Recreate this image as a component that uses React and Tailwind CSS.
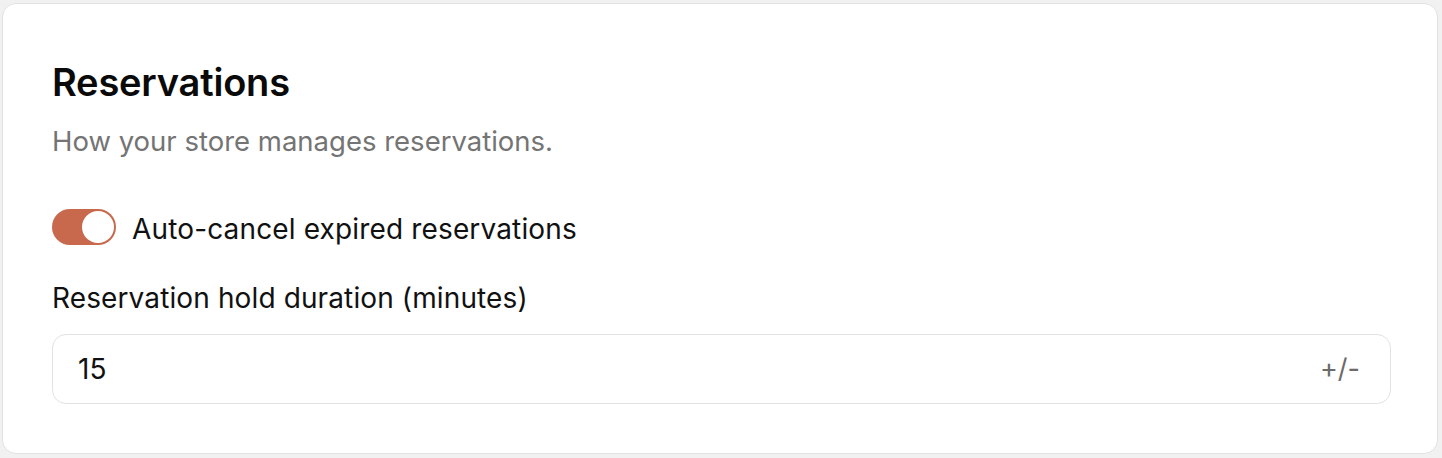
export default function App() {
  return (
    <div className="w-[1442px] h-[458px] bg-[#f1f1f1] pt-[3px] pl-[2px]" style={{ fontFamily: "Inter, 'Noto Sans', sans-serif" }}>
      <div className="w-[1436px] h-[451px] bg-white border border-[#e2e2e2] rounded-[14px] pl-[49px] pr-[46px] pt-[56px] pb-[48px] flex flex-col">
        <h2 className="text-[38px] leading-[44px] font-semibold text-[#0a0a0a] tracking-[-0.2px]">Reservations</h2>
        <p className="mt-[21px] text-[27.5px] leading-[32px] text-[#747474]">How your store manages reservations.</p>
        <div className="mt-[52px] flex items-center gap-[16px] h-[36px]">
          <button className="relative w-[64px] h-[36px] rounded-full bg-[#c8684c] shrink-0">
            <span className="absolute right-[2px] top-[2px] w-[32px] h-[32px] rounded-full bg-white"></span>
          </button>
          <span className="text-[28px] leading-[32px] tracking-[0.15px] text-[#111111] pt-[3px]">Auto-cancel expired reservations</span>
        </div>
        <label className="mt-[37px] text-[28px] leading-[32px] tracking-[0.12px] text-[#111111]">Reservation hold duration (minutes)</label>
        <div className="mt-[20px] h-[70px] w-full border border-[#e2e2e2] rounded-[14px] flex items-center justify-between pl-[25px] pr-[30px]">
          <span className="text-[28px] text-[#111111]">15</span>
          <span className="text-[27px] text-[#6b6b6b]">+/-</span>
        </div>
      </div>
    </div>
  );
}
